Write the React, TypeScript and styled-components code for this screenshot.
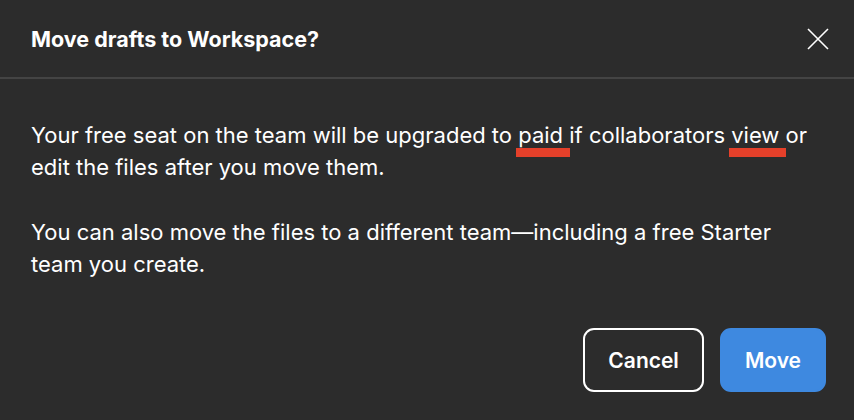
import React from "react";
import styled, { createGlobalStyle } from "styled-components";

const Global = createGlobalStyle`
  html, body { margin: 0; padding: 0; background: #2c2c2c; }
  body { font-family: Inter, "Noto Sans", sans-serif; -webkit-font-smoothing: antialiased; }
  * { box-sizing: border-box; }
`;

const Dialog = styled.div`
  width: 854px;
  height: 420px;
  background: #2c2c2c;
  color: #ffffff;
  display: flex;
  flex-direction: column;
`;

const Header = styled.div`
  height: 79px;
  display: flex;
  align-items: center;
  justify-content: space-between;
  padding: 0 25px 0 31px;
  border-bottom: 2px solid #444444;
`;

const Title = styled.h2`
  margin: 0;
  font-size: 21.5px;
  font-weight: 700;
  letter-spacing: 0;
`;

const CloseButton = styled.button`
  width: 22px;
  height: 22px;
  padding: 0;
  border: none;
  background: transparent;
  color: #ffffff;
  display: flex;
  align-items: center;
  justify-content: center;
  cursor: pointer;
`;

const Body = styled.div`
  flex: 1;
  padding: 40px 31px 0 31px;
  display: flex;
  flex-direction: column;
  gap: 33px;
`;

const Paragraph = styled.p`
  margin: 0;
  font-size: 22px;
  line-height: 32px;
  font-weight: 400;
`;

const Marked = styled.span`
  position: relative;
  &::after {
    content: "";
    position: absolute;
    left: -2px;
    right: -7px;
    top: 100%;
    height: 9px;
    background: #e5402a;
  }
`;

const Footer = styled.div`
  display: flex;
  justify-content: flex-end;
  gap: 16px;
  padding: 0 28px 28px 0;
`;

const Button = styled.button<{ $primary?: boolean }>`
  height: 64px;
  padding: 0 23px;
  border-radius: 11px;
  font-family: Inter, "Noto Sans", sans-serif;
  font-size: 21px;
  font-weight: 600;
  color: #ffffff;
  cursor: pointer;
  border: 2px solid ${(p) => (p.$primary ? "#3e89e0" : "#ffffff")};
  background: ${(p) => (p.$primary ? "#3e89e0" : "transparent")};
`;

export default function App() {
  return (
    <>
      <Global />
      <Dialog>
        <Header>
          <Title>Move drafts to Workspace?</Title>
          <CloseButton aria-label="Close">
            <svg width="22" height="22" viewBox="0 0 22 22">
              <path d="M1 1 L21 21 M21 1 L1 21" stroke="#ffffff" strokeWidth="1.6" />
            </svg>
          </CloseButton>
        </Header>
        <Body>
          <Paragraph>
            Your free seat on the team will be upgraded to <Marked>paid</Marked> if collaborators{" "}
            <Marked>view</Marked> or edit the files after you move them.
          </Paragraph>
          <Paragraph>
            You can also move the files to a different team—including a free Starter team you create.
          </Paragraph>
        </Body>
        <Footer>
          <Button>Cancel</Button>
          <Button $primary>Move</Button>
        </Footer>
      </Dialog>
    </>
  );
}
